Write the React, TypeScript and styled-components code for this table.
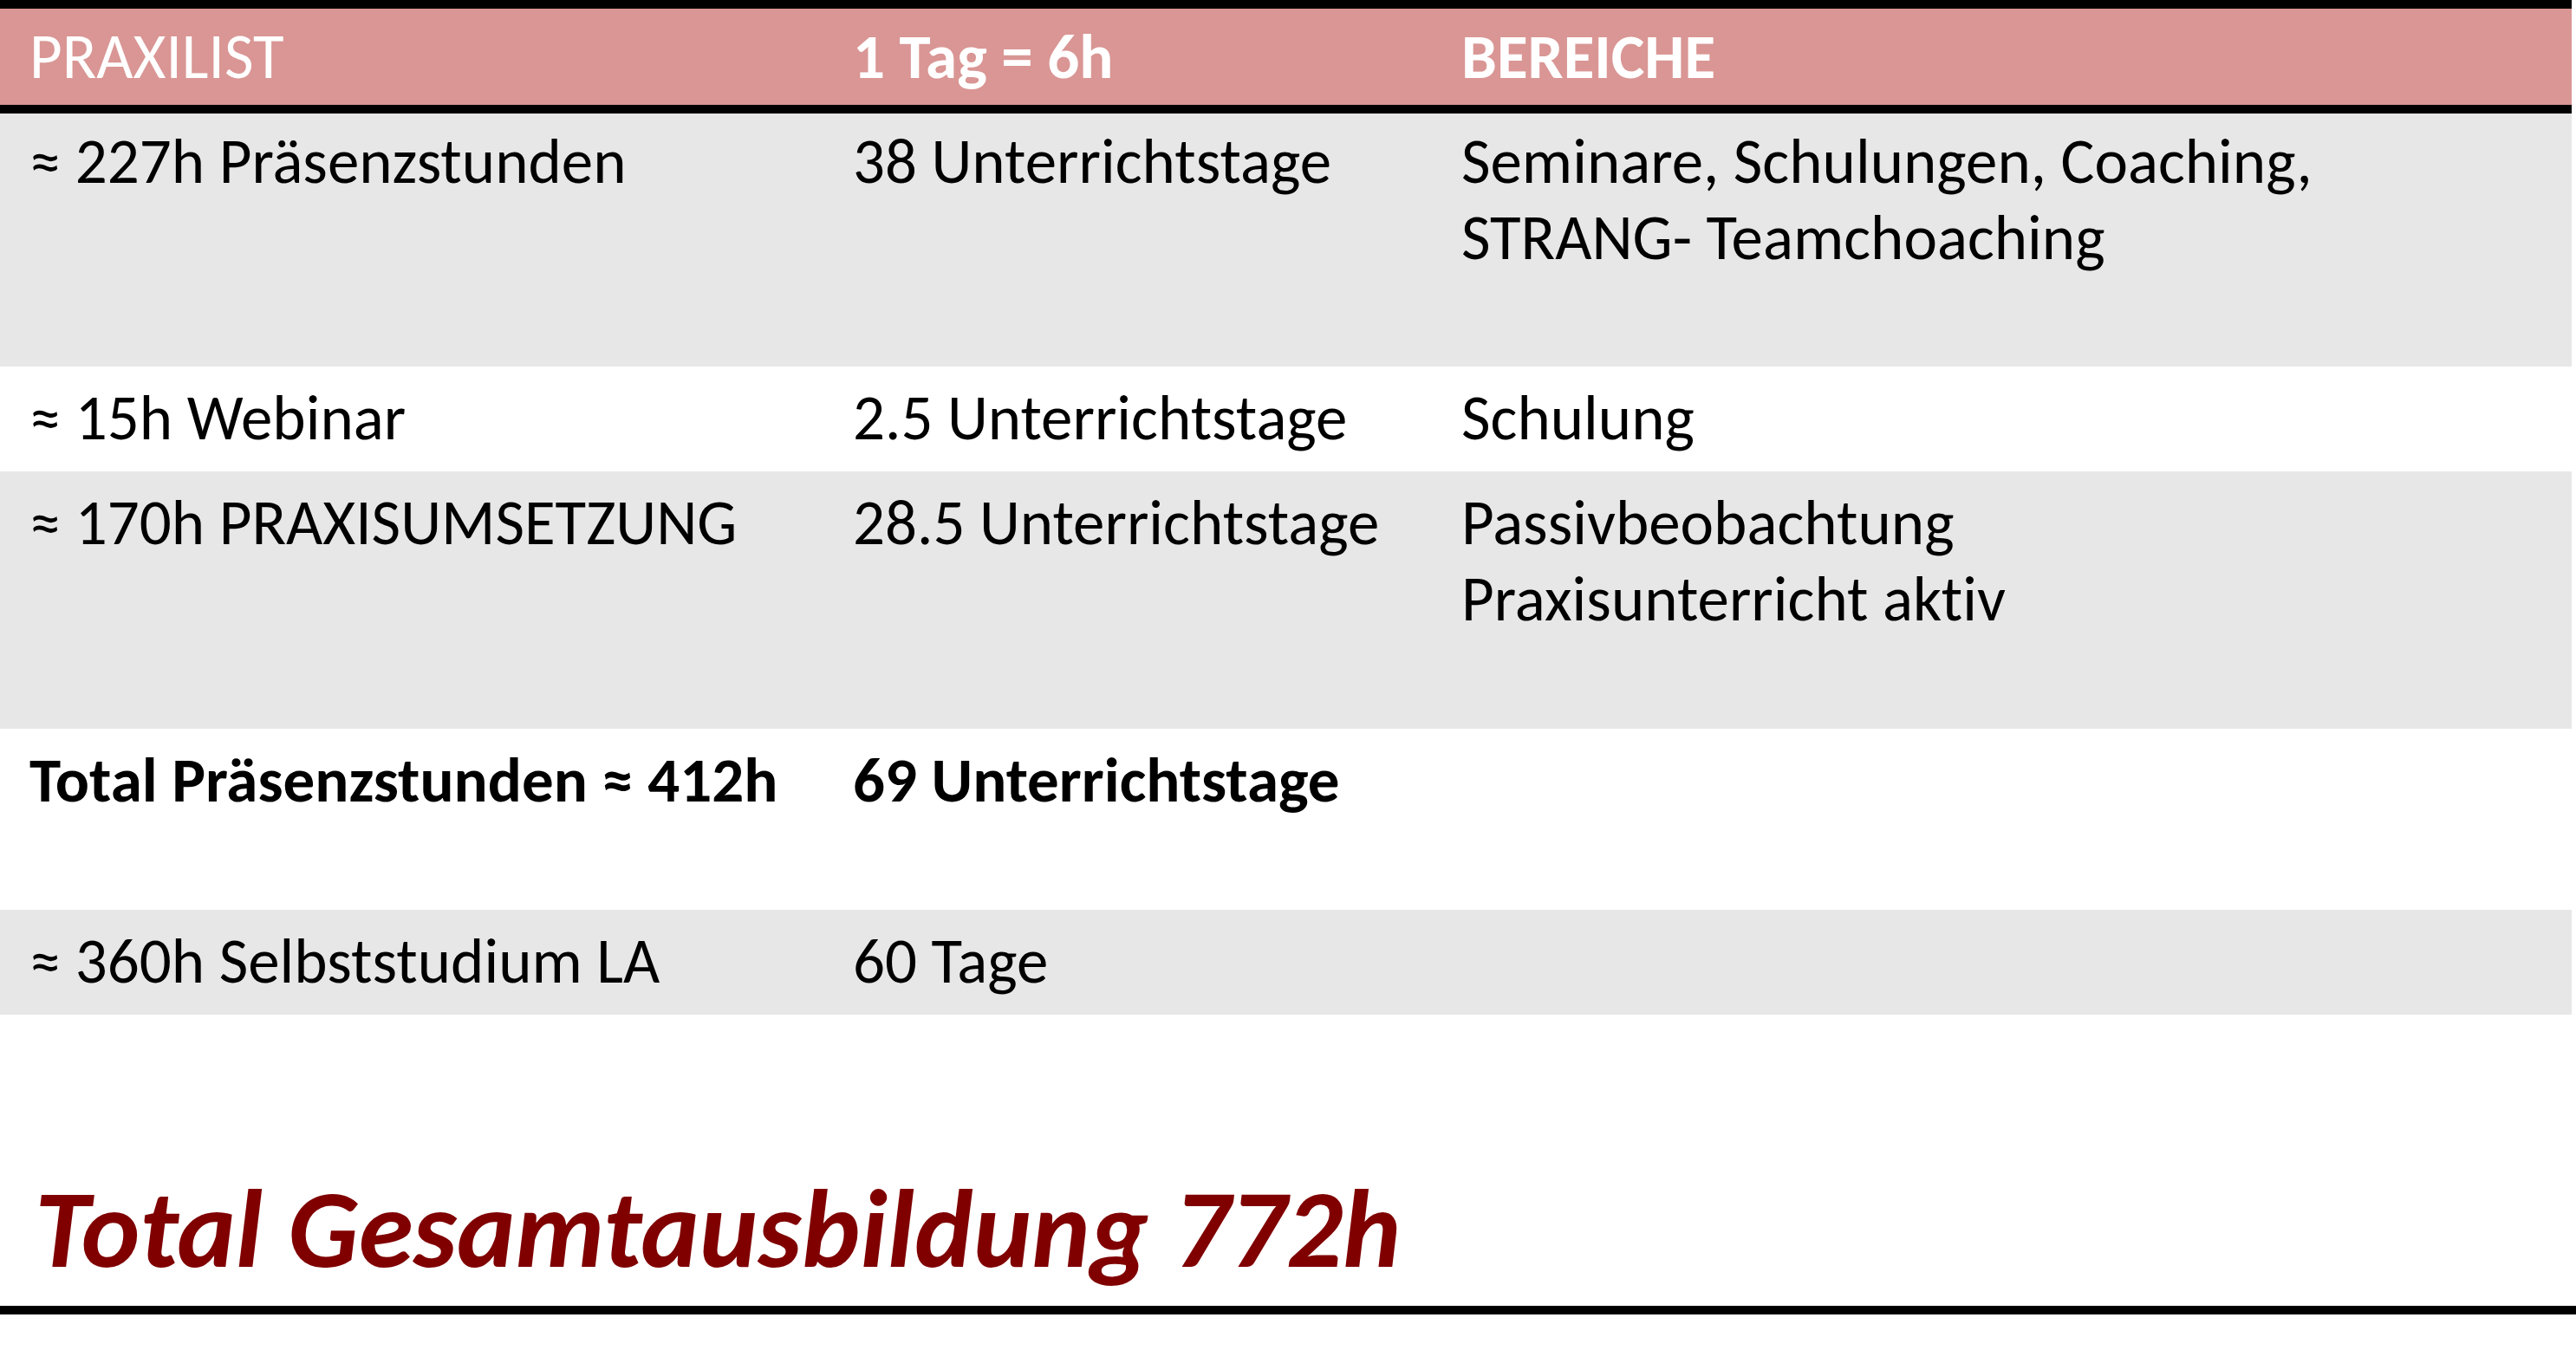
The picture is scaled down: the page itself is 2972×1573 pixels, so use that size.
import styled, { createGlobalStyle } from "styled-components";

const GlobalStyle = createGlobalStyle`
  html, body {
    margin: 0;
    padding: 0;
    background: #ffffff;
  }

  body {
    font-family: Carlito, Lato, "Liberation Sans", sans-serif;
    font-variant-ligatures: none;
    color: #000000;
  }
`;

const Page = styled.main`
  width: 2967px;
`;

const Table = styled.section`
  border-top: 10px solid #000000;
`;

const HeaderRow = styled.div`
  display: grid;
  grid-template-columns: 950px 702px 1fr;
  height: 111px;
  background: #d99694;
  border-bottom: 10px solid #000000;
  color: #ffffff;
`;

const HeaderCell = styled.div<{ $bold?: boolean }>`
  padding: 11px 0 0 34px;
  font-size: 73px;
  line-height: 88px;
  font-weight: ${({ $bold }) => ($bold ? 700 : 400)};
`;

const Cell = styled.div<{ $bold?: boolean }>`
  padding: 15px 0 0 34px;
  font-size: 73px;
  line-height: 88px;
  font-weight: ${({ $bold }) => ($bold ? 700 : 400)};
  white-space: nowrap;
`;

const Row = styled.div<{ $shaded?: boolean; $height: number }>`
  display: grid;
  grid-template-columns: 950px 702px 1fr;
  height: ${({ $height }) => $height}px;
  background: ${({ $shaded }) => ($shaded ? "#e7e7e7" : "#ffffff")};

  /* first body row sits right under the thick header rule */
  ${HeaderRow} + & > ${Cell} {
    padding-top: 11px;
  }
`;

const Summary = styled.footer`
  display: flex;
  align-items: flex-end;
  width: 2972px;
  height: 346px;
  padding: 0 0 25px 40px;
  box-sizing: border-box;
  border-bottom: 10px solid #000000;
`;

const TotalTitle = styled.h1`
  margin: 0;
  font-size: 128px;
  line-height: 1;
  font-weight: 700;
  font-style: italic;
  color: #800000;
`;

type RowData = {
  shaded: boolean;
  height: number;
  bold?: boolean;
  cells: React.ReactNode[];
};

const rows: RowData[] = [
  {
    shaded: true,
    height: 292,
    cells: [
      "≈ 227h Präsenzstunden",
      "38 Unterrichtstage",
      <>
        Seminare, Schulungen, Coaching,
        <br />
        STRANG- Teamchoaching
      </>,
    ],
  },
  {
    shaded: false,
    height: 121,
    cells: ["≈ 15h Webinar", "2.5 Unterrichtstage", "Schulung"],
  },
  {
    shaded: true,
    height: 297,
    cells: [
      "≈ 170h PRAXISUMSETZUNG",
      "28.5 Unterrichtstage",
      <>
        Passivbeobachtung
        <br />
        Praxisunterricht aktiv
      </>,
    ],
  },
  {
    shaded: false,
    height: 209,
    bold: true,
    cells: ["Total Präsenzstunden ≈ 412h", "69 Unterrichtstage", ""],
  },
  {
    shaded: true,
    height: 121,
    cells: ["≈ 360h Selbststudium LA", "60 Tage", ""],
  },
];

function App() {
  return (
    <>
      <GlobalStyle />
      <Page>
        <Table>
          <HeaderRow>
            <HeaderCell>PRAXILIST</HeaderCell>
            <HeaderCell $bold>1 Tag = 6h</HeaderCell>
            <HeaderCell $bold>BEREICHE</HeaderCell>
          </HeaderRow>
          {rows.map((row, i) => (
            <Row key={i} $shaded={row.shaded} $height={row.height}>
              {row.cells.map((cell, j) => (
                <Cell key={j} $bold={row.bold}>
                  {cell}
                </Cell>
              ))}
            </Row>
          ))}
        </Table>
        <Summary>
          <TotalTitle>Total Gesamtausbildung 772h</TotalTitle>
        </Summary>
      </Page>
    </>
  );
}

export default App;
